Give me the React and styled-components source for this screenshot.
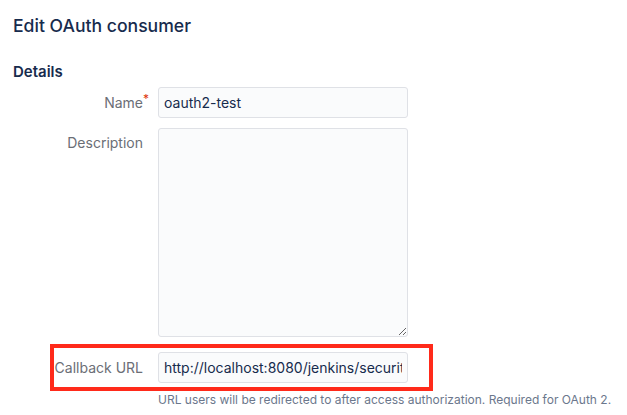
import React from 'react'
import styled, { createGlobalStyle } from 'styled-components'

const GlobalStyle = createGlobalStyle`
    body {
        margin: 0;
        background: #fff;
        font-family: Inter, "Noto Sans", sans-serif;
        color: #172b4d;
    }
`

export default function App() {
    return (
        <Page>
            <GlobalStyle />
            <Title>Edit OAuth consumer</Title>
            <Section>Details</Section>
            <Form>
                <Row>
                    <Label>
                        <LabelText>
                            Name<Required>*</Required>
                        </LabelText>
                    </Label>
                    <TextInput defaultValue="oauth2-test" readOnly />
                </Row>
                <Row>
                    <Label $top={5}>Description</Label>
                    <TextArea readOnly />
                </Row>
                <Highlight>
                    <Label $width={89} $top={0}>
                        Callback URL
                    </Label>
                    <TextInput
                        defaultValue="http://localhost:8080/jenkins/securityRealm/finishLogin"
                        readOnly
                    />
                </Highlight>
                <Help>
                    URL users will be redirected to after access authorization. Required for OAuth 2.
                </Help>
            </Form>
        </Page>
    )
}

const Page = styled.div`
    width: 627px;
    height: 415px;
    padding: 14px 13px 0;
    box-sizing: border-box;
    overflow: hidden;
`

const Title = styled.h1`
    margin: 0;
    font-size: 17.6px;
    font-weight: 500;
    line-height: 24px;
    color: #172b4d;
`

const Section = styled.h2`
    margin: 24px 0 0;
    font-size: 15px;
    font-weight: 600;
    line-height: 20px;
    color: #172b4d;
`

const Form = styled.div`
    display: flex;
    flex-direction: column;
    align-items: flex-start;
    gap: 10px;
    margin-top: 5px;
`

const Row = styled.div`
    display: flex;
    align-items: flex-start;
    gap: 15px;
`

const Highlight = styled(Row)`
    align-items: center;
    margin: -3px 0 0 37px;
    height: 47px;
    padding: 0 21px 0 0;
    box-sizing: border-box;
    border: 4px solid #ff2a1a;
`

const Label = styled.div`
    width: ${(props) => props.$width || 130}px;
    flex: none;
    padding-top: ${(props) => (props.$top !== undefined ? props.$top : 6)}px;
    text-align: right;
    font-size: 14px;
    line-height: 20px;
    color: #6b6e76;
`

const LabelText = styled.span`
    position: relative;
`

const Required = styled.span`
    position: absolute;
    top: -5px;
    right: -6px;
    color: #de350b;
    font-size: 12px;
`

const TextInput = styled.input`
    display: block;
    flex: none;
    width: 250px;
    height: 31px;
    box-sizing: border-box;
    padding: 0 5px;
    border: 1px solid #dfe1e6;
    border-radius: 3px;
    background: #fafbfc;
    font-family: Inter, "Noto Sans", sans-serif;
    font-size: 14px;
    color: #172b4d;
    outline: none;
`

const TextArea = styled.textarea`
    display: block;
    flex: none;
    width: 250px;
    height: 209px;
    box-sizing: border-box;
    border: 1px solid #dfe1e6;
    border-radius: 3px;
    background: #fafbfc;
    outline: none;
`

const Help = styled.div`
    margin: -9px 0 0 145px;
    font-size: 12px;
    line-height: 16px;
    color: #6b778c;
    white-space: nowrap;
`
